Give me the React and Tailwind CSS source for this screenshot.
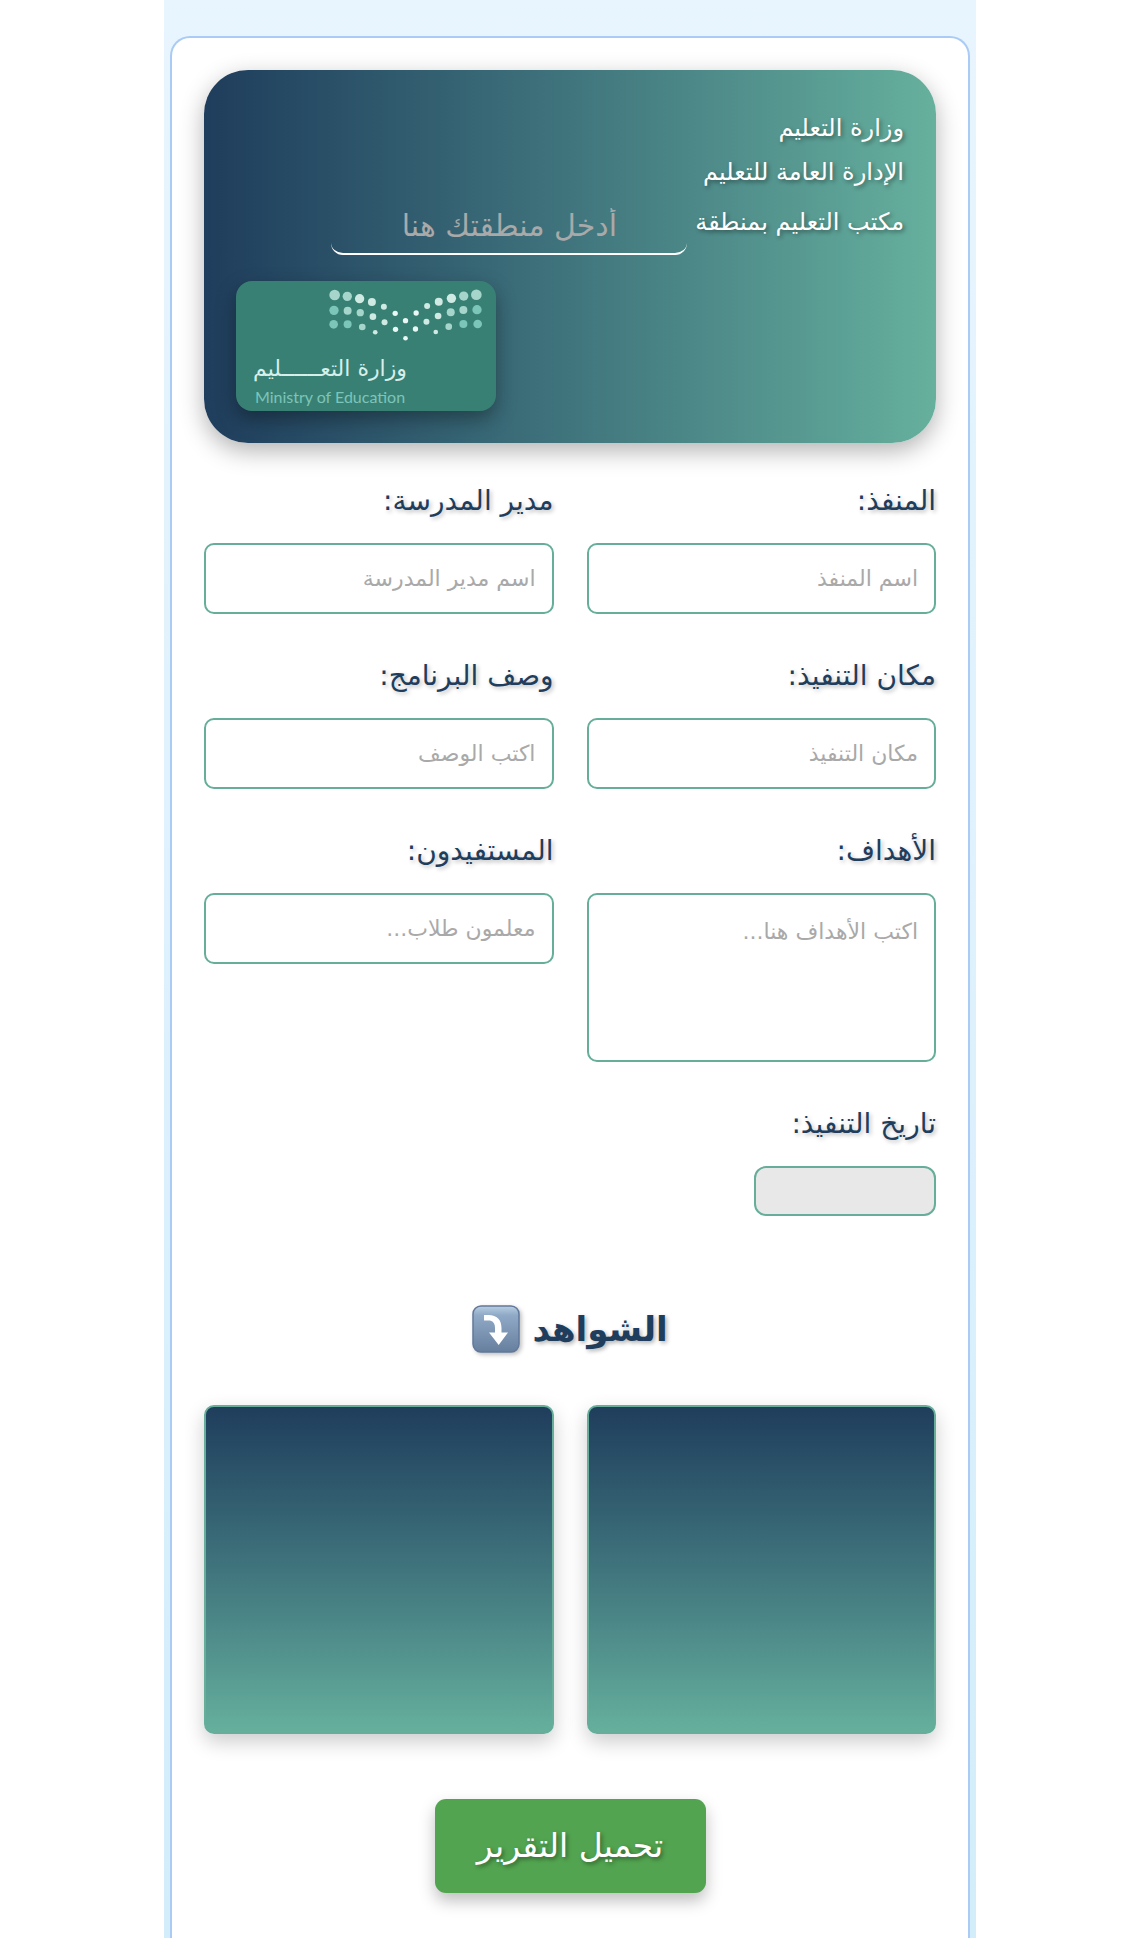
const SANS = "font-['DejaVu_Sans',sans-serif]";

const LIGHT = '#cfe9e3';
const MID = '#a6d5cc';
const TEAL = '#7cc5b9';
const PALE = '#eaf7f4';

const DOTS = [
  [347, 72, 16, MID], [385, 76, 14, MID], [422, 83, 14, LIGHT], [459, 93, 12, LIGHT], [495, 107, 9, LIGHT], [529, 127, 8, PALE],
  [560, 149, 8, PALE],
  [592, 126, 8, PALE], [625, 105, 9, LIGHT], [660, 92, 12, LIGHT], [698, 82, 14, LIGHT], [735, 75, 14, MID], [773, 71, 16, MID],
  [345, 118, 14, TEAL], [386, 119, 12, MID], [424, 125, 11, MID], [462, 137, 10, LIGHT], [497, 154, 9, LIGHT], [530, 175, 8, PALE],
  [560, 202, 7, PALE],
  [590, 174, 8, PALE], [623, 152, 9, LIGHT], [658, 135, 10, LIGHT], [696, 124, 12, MID], [734, 117, 12, MID], [775, 116, 14, TEAL],
  [344, 160, 13, TEAL], [386, 160, 12, TEAL], [430, 168, 10, MID], [469, 184, 7, LIGHT],
  [651, 183, 7, LIGHT], [690, 167, 10, MID], [734, 159, 12, TEAL], [777, 159, 13, TEAL],
];

function MinistryLogo() {
  return (
    <div
      dir="ltr"
      className="flex h-[130px] w-[260px] flex-col rounded-2xl bg-[#398074] px-4 pt-2 shadow-[0_8px_20px_rgba(0,0,0,0.35)]"
    >
      <svg viewBox="330 54 460 156" className="ml-[77px] h-[52px] w-[153px] shrink-0" aria-hidden="true">
        {DOTS.map(([x, y, r, fill]) => (
          <circle key={`${x}-${y}`} cx={x} cy={y} r={r} fill={fill} />
        ))}
      </svg>
      <div className="mt-3 flex w-[156px] flex-col items-center whitespace-nowrap">
        <span dir="rtl" className="text-[22px] leading-8 text-[#d6efea]">وزارة التعــــــليم</span>
        <span className="font-['Lato',sans-serif] text-[16px] leading-6 text-[#7cc5b9]">Ministry of Education</span>
      </div>
    </div>
  );
}

function Label({ id, children }) {
  return (
    <label
      htmlFor={id}
      className="mb-6 block text-[28px] leading-9 font-medium text-[#1f3d5c] [text-shadow:2px_2px_4px_rgba(0,0,0,0.25)]"
    >
      {children}
    </label>
  );
}

const BOX = 'rounded-[10px] border-2 border-[#66ae9a] bg-white px-4 text-[22px] text-[#1f3d5c] outline-none placeholder:text-[#a9a9a9] placeholder:opacity-100';

function Field({ id, label, placeholder }) {
  return (
    <div>
      <Label id={id}>{label}</Label>
      <input id={id} type="text" placeholder={placeholder} className={`${BOX} block h-[71px] w-full`} />
    </div>
  );
}

function ArrowBadge() {
  return (
    <svg viewBox="0 0 48 48" className="size-12 drop-shadow-[2px_2px_2px_rgba(0,0,0,0.25)]" role="img" aria-label="سهم لأسفل">
      <defs>
        <linearGradient id="badge" x1="0" y1="0" x2="0" y2="1">
          <stop offset="0" stopColor="#b9cfe2" />
          <stop offset="0.2" stopColor="#8fa9c6" />
          <stop offset="1" stopColor="#667f9e" />
        </linearGradient>
      </defs>
      <rect x="1" y="1" width="46" height="46" rx="8" fill="url(#badge)" stroke="#61789a" strokeWidth="1.5" />
      <path d="M12 10h4.500c8.500 0 13 5 13 13v4.500h6.500L26.700 40 17 27.500h6V23c0-5-2.300-7.500-6.500-7.500H12z" fill="#fff" />
    </svg>
  );
}

function Evidence() {
  return (
    <div className="h-[329px] rounded-[10px] border-2 border-[#66ae9a] bg-linear-to-b from-[#1f3d5c] to-[#66b09d] bg-origin-border shadow-[0_8px_20px_rgba(0,0,0,0.2)]" />
  );
}

export default function App() {
  return (
    <div className={`flex min-h-screen justify-center bg-white pl-[15px] ${SANS}`}>
      <main dir="rtl" className="flex w-full max-w-[812px] flex-col bg-linear-to-b from-[#e8f5fe] to-[#d3edfb] px-[6px] pt-9">
        <form
          onSubmit={(event) => event.preventDefault()}
          className="flex-1 rounded-t-[20px] border-2 border-b-0 border-[#a9cbf5] bg-white px-8 pt-8 pb-11"
        >
          <header className="rounded-[44px] bg-linear-to-r from-[#1f3d5c] to-[#66b09d] p-8 text-white shadow-[0_8px_24px_rgba(0,0,0,0.3)]">
            <div className="pt-1 text-[24px] leading-11 [text-shadow:2px_2px_4px_rgba(0,0,0,0.4)]">
              <p>وزارة التعليم</p>
              <p>الإدارة العامة للتعليم</p>
              <div className="mt-1 flex items-start gap-2">
                <label htmlFor="region" className="leading-12 whitespace-nowrap">مكتب التعليم بمنطقة</label>
                <input
                  id="region"
                  type="text"
                  placeholder="أدخل منطقتك هنا"
                  className="h-[57px] w-[356px] rounded-[12px] border-b-2 border-white bg-transparent text-center text-[30px] outline-none placeholder:text-[#a9a9a9] placeholder:opacity-100 [text-shadow:none]"
                />
              </div>
            </div>
            <div className="mt-[26px] flex justify-end">
              <MinistryLogo />
            </div>
          </header>

          <section className="mt-10 grid grid-cols-2 gap-x-[33px] gap-y-11">
            <Field id="executor" label="المنفذ:" placeholder="اسم المنفذ" />
            <Field id="principal" label="مدير المدرسة:" placeholder="اسم مدير المدرسة" />
            <Field id="place" label="مكان التنفيذ:" placeholder="مكان التنفيذ" />
            <Field id="description" label="وصف البرنامج:" placeholder="اكتب الوصف" />
            <div>
              <Label id="goals">الأهداف:</Label>
              <textarea id="goals" placeholder="اكتب الأهداف هنا..." className={`${BOX} block h-[169px] w-full resize-none py-5`} />
            </div>
            <Field id="audience" label="المستفيدون:" placeholder="معلمون طلاب..." />
            <div>
              <Label id="date">تاريخ التنفيذ:</Label>
              <input id="date" type="text" className="block h-[50px] w-[182px] rounded-[12px] border-2 border-[#66ae9a] bg-[#e8e8e8] px-4 outline-none" />
            </div>
          </section>

          <h2 className="mt-[89px] flex items-center justify-center gap-3 text-[34px] leading-12 font-bold text-[#1f3d5c] [text-shadow:2px_2px_4px_rgba(0,0,0,0.3)]">
            الشواهد
            <ArrowBadge />
          </h2>

          <section className="mt-[52px] grid grid-cols-2 gap-x-[33px]">
            <Evidence />
            <Evidence />
          </section>

          <div className="mt-[65px] flex justify-center">
            <button
              type="submit"
              className="h-[94px] w-[271px] rounded-[11px] bg-[#52a450] text-[33px] text-white shadow-[0_8px_16px_rgba(0,0,0,0.25)] [text-shadow:2px_2px_4px_rgba(0,0,0,0.4)]"
            >
              تحميل التقرير
            </button>
          </div>
        </form>
      </main>
    </div>
  );
}
